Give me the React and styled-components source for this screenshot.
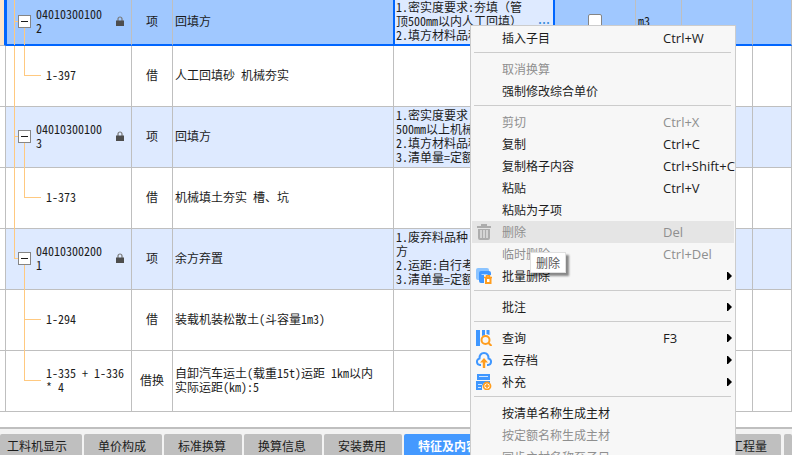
import React from 'react'
import styled, { createGlobalStyle, css } from 'styled-components'

const GlobalStyle = createGlobalStyle`
    * {
        box-sizing: border-box;
    }

    body {
        margin: 0;
        background: #ffffff;
        color: #1c1c1c;
        font-family: "Open Sans", "Noto Sans CJK SC", sans-serif;
        font-size: 12px;
    }
`

const colors = {
    line: '#bfbfbf',
    tree: '#ffc980',
    select: '#0066ff',
    selectedRow: '#a0c8ff',
    itemRow: '#deeaff',
    tab: '#bfbfbf',
    activeTab: '#4499ff',
}

const rows = [
    {
        id: 'a', kind: 'item', selected: true, code: ['04010300100', '2'], type: '项', name: ['回填方'],
        feature: ['1.密实度要求:夯填（管', '顶500mm以内人工回填）', '2.填方材料品种'], unit: 'm3',
        outer: 'full', inner: 'down',
    },
    { id: 'b', kind: 'quota', code: ['1-397'], type: '借', name: ['人工回填砂 机械夯实'], outer: 'full', inner: 'end' },
    {
        id: 'c', kind: 'item', code: ['04010300100', '3'], type: '项', name: ['回填方'],
        feature: ['1.密实度要求:', '500mm以上机械', '2.填方材料品种', '3.清单量=定额'],
        outer: 'full', inner: 'down',
    },
    { id: 'd', kind: 'quota', code: ['1-373'], type: '借', name: ['机械填土夯实 槽、坑'], outer: 'full', inner: 'end' },
    {
        id: 'e', kind: 'item', code: ['04010300200', '1'], type: '项', name: ['余方弃置'],
        feature: ['1.废弃料品种:', '方', '2.运距:自行考', '3.清单量=定额'],
        outer: 'end', inner: 'down',
    },
    { id: 'f', kind: 'quota', code: ['1-294'], type: '借', name: ['装载机装松散土(斗容量1m3)'], inner: 'full' },
    {
        id: 'g', kind: 'quota', code: ['1-335 + 1-336', '* 4'], type: '借换',
        name: ['自卸汽车运土(载重15t)运距 1km以内', '实际运距(km):5'], inner: 'end',
    },
]

const menu = [
    [{ label: '插入子目', keys: 'Ctrl+W' }],
    [{ label: '取消换算', disabled: true }, { label: '强制修改综合单价' }],
    [
        { label: '剪切', keys: 'Ctrl+X', disabled: true },
        { label: '复制', keys: 'Ctrl+C' },
        { label: '复制格子内容', keys: 'Ctrl+Shift+C' },
        { label: '粘贴', keys: 'Ctrl+V' },
        { label: '粘贴为子项' },
        { label: '删除', keys: 'Del', disabled: true, hovered: true, icon: 'trash' },
        { label: '临时删除', keys: 'Ctrl+Del', disabled: true },
        { label: '批量删除', sub: true, icon: 'batch' },
    ],
    [{ label: '批注', sub: true }],
    [
        { label: '查询', keys: 'F3', sub: true, icon: 'search' },
        { label: '云存档', sub: true, icon: 'cloud' },
        { label: '补充', sub: true, icon: 'add' },
    ],
    [
        { label: '按清单名称生成主材' },
        { label: '按定额名称生成主材', disabled: true },
        { label: '同步主材名称至子目', disabled: true },
    ],
]

const tabs = ['工料机显示', '单价构成', '标准换算', '换算信息', '安装费用', '特征及内容']

const icons = {
    trash: (
        <>
            <path d="M5 0h6v2h4v2H1V2h4zM2 5h12v9a2 2 0 0 1-2 2H4a2 2 0 0 1-2-2z" fill="#adadad" />
            <path d="M5 6v8M8 6v8M11 6v8" stroke="#e5e5e5" strokeWidth="1.400" />
        </>
    ),
    batch: (
        <>
            <path d="M2 0h9a2 2 0 0 1 2 2v2H4v8H2a2 2 0 0 1-2-2V2a2 2 0 0 1 2-2z" fill="#8cc4ff" />
            <path d="M5 3h8a2 2 0 0 1 2 2v3H8v7H5a2 2 0 0 1-2-2V5a2 2 0 0 1 2-2z" fill="#3f97ff" />
            <path d="M5.500 6.500h6" stroke="#a9d2ff" />
            <path d="M8 7h8v9H8z" fill="#f7f7f7" />
            <path d="M8 9.500h8M10.500 9V7.800h3V9" stroke="#ff9d1e" strokeWidth="1.500" fill="none" />
            <path d="M10 10h4.500v5H10z" fill="#fff" stroke="#ff9d1e" strokeWidth="2" />
        </>
    ),
    search: (
        <>
            <path d="M0 0h4v16H0zM6 0h3v5L6 6zM10.500 0h3v5l-3-1z" fill="#3f97ff" />
            <circle cx="9.500" cy="10" r="4" fill="none" stroke="#ff9d1e" strokeWidth="2" />
            <path d="M12.500 13l3 3" stroke="#ff9d1e" strokeWidth="2" />
        </>
    ),
    cloud: (
        <>
            <path d="M5 13H4a3.300 3.300 0 0 1-.5-6.500C3.500 3 5.500 1 8 1s4.500 2 4.500 5.500A3.300 3.300 0 0 1 12 13h-1" fill="none" stroke="#3f97ff" strokeWidth="2" />
            <path d="M8 6l4 4.500H9.200V16H6.800v-5.500H4z" fill="#ff9d1e" />
        </>
    ),
    add: (
        <>
            <path d="M1 0h13v6H1zM0 7h14v2H8l-2 3v4H0z" fill="#3f97ff" />
            <path d="M3 2.500h9M2 10.500h4M2 13.500h3" stroke="#cfe5ff" />
            <circle cx="11" cy="12" r="3.500" fill="#fff" stroke="#ff9d1e" strokeWidth="1.800" />
            <path d="M11 10v4M9 12h4" stroke="#ff9d1e" strokeWidth="1.500" />
        </>
    ),
}

// full-width brackets keep their own width inside the half-width text
const Lines = ({ lines = [] }) => lines.map((line) => (
    <Line key={line}>
        {line.split(/([（）])/).map((part, index) => index % 2 ? <Bracket key={index}>{part}</Bracket> : part)}
    </Line>
))

const TreeCell = ({ row }) => (
    <CodeCell $selected={row.selected}>
        {row.outer && <OuterGuide $end={row.outer === 'end'} />}
        {row.kind === 'item' && row.outer && <OuterBranch />}
        <InnerGuide $part={row.inner} />
        {row.kind === 'item' ? <Toggle type="button" aria-label="-" /> : <InnerBranch />}
        <Code $child={row.kind === 'quota'}>
            <div><Lines lines={row.code} /></div>
            {row.kind === 'item' && (
                <Lock viewBox="0 0 8 10">
                    <path d="M2 5V3a2 2 0 0 1 4 0v2" fill="none" stroke="#777777" strokeWidth="1.200" />
                    <path d="M0 4.500h8V10H0z" fill="#4d4d4d" />
                </Lock>
            )}
        </Code>
    </CodeCell>
)

const BillTable = () => (
    <Table>
        <colgroup>
            <Col $width={6} />
            <Col $width={126} />
            <Col $width={41} />
            <Col $width={221} />
            <Col $width={161} />
            <Col $width={81} />
            <Col $width={46} />
            <Col $width={71} />
            <col />
        </colgroup>
        <tbody>
            {rows.map((row) => (
                <Row key={row.id} $kind={row.kind} $selected={row.selected}>
                    <Gutter $selected={row.selected} />
                    <TreeCell row={row} />
                    <Cell $center>{row.type}</Cell>
                    <Cell $edge={row.selected}><Lines lines={row.name} /></Cell>
                    <FeatureCell $selected={row.selected}>
                        <Lines lines={row.feature} />
                        {row.selected && <More type="button">…</More>}
                    </FeatureCell>
                    <Cell $center>{row.selected && <Check type="checkbox" aria-label={row.name[0]} />}</Cell>
                    <Cell>{row.unit}</Cell>
                    <Cell />
                    <Cell />
                </Row>
            ))}
        </tbody>
    </Table>
)

const ContextMenu = () => (
    <Menu>
        {menu.map((group, index) => (
            <React.Fragment key={group[0].label}>
                {index > 0 && <Separator />}
                {group.map((item) => (
                    <MenuItem key={item.label} type="button" disabled={item.disabled} $hovered={item.hovered}>
                        <IconSlot>{item.icon && <Icon viewBox="0 0 16 16">{icons[item.icon]}</Icon>}</IconSlot>
                        <Label>{item.label}</Label>
                        <Shortcut>
                            <span>{item.keys}</span>
                            {item.sub && <Arrow viewBox="0 0 5 8"><path d="M0 0h1l4 4-4 4H0z" /></Arrow>}
                        </Shortcut>
                    </MenuItem>
                ))}
            </React.Fragment>
        ))}
    </Menu>
)

const App = () => (
    <Page>
        <GlobalStyle />
        <Sheet>
            <BillTable />
        </Sheet>
        <TabBar>
            {tabs.map((tab, index) => (
                <Tab key={tab} type="button" $active={index === 5} $first={index === 0}>{tab}</Tab>
            ))}
            <WideTab type="button">工程量</WideTab>
            <Tab type="button" />
        </TabBar>
        <ContextMenu />
        <Tooltip role="tooltip">删除</Tooltip>
    </Page>
)

export default App

const Page = styled.div`
    position: relative;
    display: flex;
    flex-direction: column;
    height: 100vh;
    overflow: hidden;
`

const Sheet = styled.main`
    flex: 1;
    min-height: 0;
    overflow: hidden;
    /* 12px CJK grid with half-width latin */
    font-family: "Noto Sans CJK SC", sans-serif;
    font-feature-settings: "hwid";
    line-height: 14px;
`

const Table = styled.table`
    width: 100%;
    margin-top: -1px;
    table-layout: fixed;
    border-collapse: separate;
    border-spacing: 0;
`

const Col = styled.col`
    width: ${(props) => props.$width}px;
`

const Cell = styled.td`
    position: relative;
    padding: 0 0 2px 2px;
    border-right: 1px solid ${colors.line};
    border-bottom: 1px solid ${colors.line};
    white-space: pre;
    ${(props) => props.$center && css`
        padding: 0 0 2px;
        text-align: center;
    `}
    ${(props) => props.$edge && css`
        border-right-color: ${colors.select};
    `}
`

const Row = styled.tr`
    height: 61px;
    background: ${(props) => props.$kind === 'item' ? colors.itemRow : '#ffffff'};
    ${(props) => props.$selected && css`
        height: 47px;
        background: ${colors.selectedRow};

        ${Cell} {
            border-bottom: 2px solid ${colors.select};
        }
    `}
`

const Gutter = styled.td`
    padding: 0;
    border-right: 1px solid ${colors.line};
    border-bottom: 1px solid ${colors.line};
    background: #ffffff;
    ${(props) => props.$selected && css`
        border-right: 2px solid ${colors.select};
        background: #fde6cb;
    `}
`

const CodeCell = styled(Cell)`
    padding: 0 0 2px;
    box-shadow: ${(props) => props.$selected ? `inset 1px 0 ${colors.select}` : 'none'};
`

const FeatureCell = styled(Cell)`
    overflow: hidden;
    ${(props) => props.$selected && css`
        border-right: 2px solid ${colors.select};
        background: ${colors.itemRow};
        box-shadow: inset 1px 0 ${colors.select};
    `}
`

const Line = styled.div`
    height: 14px;
`

const Bracket = styled.span`
    font-feature-settings: normal;
`

const Code = styled.div`
    display: flex;
    align-items: center;
    justify-content: space-between;
    padding: 0 7px 0 ${(props) => props.$child ? 40 : 30}px;
`

const Lock = styled.svg`
    width: 8px;
    height: 10px;
`

const Guide = styled.span`
    position: absolute;
    background: ${colors.tree};
`

const OuterGuide = styled(Guide)`
    top: 0;
    bottom: ${(props) => props.$end ? '50%' : '-1px'};
    left: 8px;
    width: 1px;
`

const OuterBranch = styled(Guide)`
    top: calc(50% - 1px);
    left: 8px;
    width: 4px;
    height: 1px;
`

const InnerGuide = styled(Guide)`
    top: ${(props) => props.$part === 'down' ? '50%' : '0'};
    bottom: ${(props) => props.$part === 'end' ? '50%' : '-1px'};
    left: 18px;
    width: 1px;
`

const InnerBranch = styled(Guide)`
    top: calc(50% - 1px);
    left: 18px;
    width: 17px;
    height: 1px;
`

const Toggle = styled.button`
    position: absolute;
    top: calc(50% - 7px);
    left: 12px;
    width: 13px;
    height: 13px;
    padding: 0 2px;
    border: 1px solid #858585;
    background: #ffffff;

    &::before {
        content: "";
        display: block;
        height: 1px;
        background: #1c1c1c;
    }
`

const More = styled.button`
    position: absolute;
    right: 3px;
    bottom: 14px;
    padding: 0;
    border: 0;
    background: none;
    color: #3b8ad9;
    font: bold 12px/14px "Noto Sans CJK SC", sans-serif;
`

const Check = styled.input`
    display: block;
    width: 14px;
    height: 14px;
    margin: 0 auto;
    appearance: none;
    border: 1px solid #858585;
    border-radius: 2px;
    background: #ffffff;
`

const TabBar = styled.nav`
    display: flex;
    flex: none;
    gap: 2px;
    height: 28px;
    padding-top: 5px;
    border-top: 2px solid ${colors.line};
    background: #f3f3f3;
`

const Tab = styled.button`
    flex: none;
    width: ${(props) => props.$first ? 82 : 78}px;
    height: 24px;
    padding: 0 14px 0 ${(props) => props.$first ? 7 : 14}px;
    border: 0;
    border-radius: 2px 2px 0 0;
    background: ${colors.tab};
    color: #1c1c1c;
    font: 12px/24px "Noto Sans CJK SC", sans-serif;
    text-align: left;
    white-space: nowrap;
    ${(props) => props.$active && css`
        width: 90px;
        background: ${colors.activeTab};
        color: #ffffff;
        font-weight: bold;
    `}
`

const WideTab = styled(Tab)`
    flex: 1;
    margin-right: 1px;
    text-align: right;

    & + ${Tab} {
        width: 8px;
        padding: 0;
    }
`

const Menu = styled.div`
    position: absolute;
    top: 25px;
    left: 470px;
    width: 266px;
    padding: 1px;
    border: 1px solid #cccccc;
    background: #f7f7f7;
`

const MenuItem = styled.button`
    display: grid;
    grid-template-columns: 30px 161px 1fr;
    align-items: center;
    width: 100%;
    height: 22px;
    padding: 0;
    border: 0;
    background: ${(props) => props.$hovered ? '#e5e5e5' : 'transparent'};
    color: ${(props) => props.disabled ? '#8f8f8f' : '#1c1c1c'};
    font: 12px/20px "Open Sans", "Noto Sans CJK SC", sans-serif;
    text-align: left;
    white-space: nowrap;
`

const IconSlot = styled.span`
    display: flex;
    padding-left: 4px;
`

const Icon = styled.svg`
    width: 16px;
    height: 16px;
`

const Label = styled.span`
    padding-top: 2px;
`

const Shortcut = styled.span`
    display: flex;
    align-items: center;
    justify-content: space-between;
    min-width: 0;
    padding-right: 2px;
    font-size: 13px;
`

const Arrow = styled.svg`
    flex: none;
    width: 5px;
    height: 8px;
`

const Separator = styled.div`
    height: 1px;
    margin: 3px 3px 5px 2px;
    background: #cccccc;
`

const Tooltip = styled.div`
    position: absolute;
    top: 252px;
    left: 530px;
    padding: 0 5px;
    border: 1px solid #e0e0e0;
    background: #ffffff;
    box-shadow: 3px 3px 2px rgba(0, 0, 0, .45);
    color: #575757;
    font: 12px/19px "Noto Sans CJK SC", sans-serif;
`
